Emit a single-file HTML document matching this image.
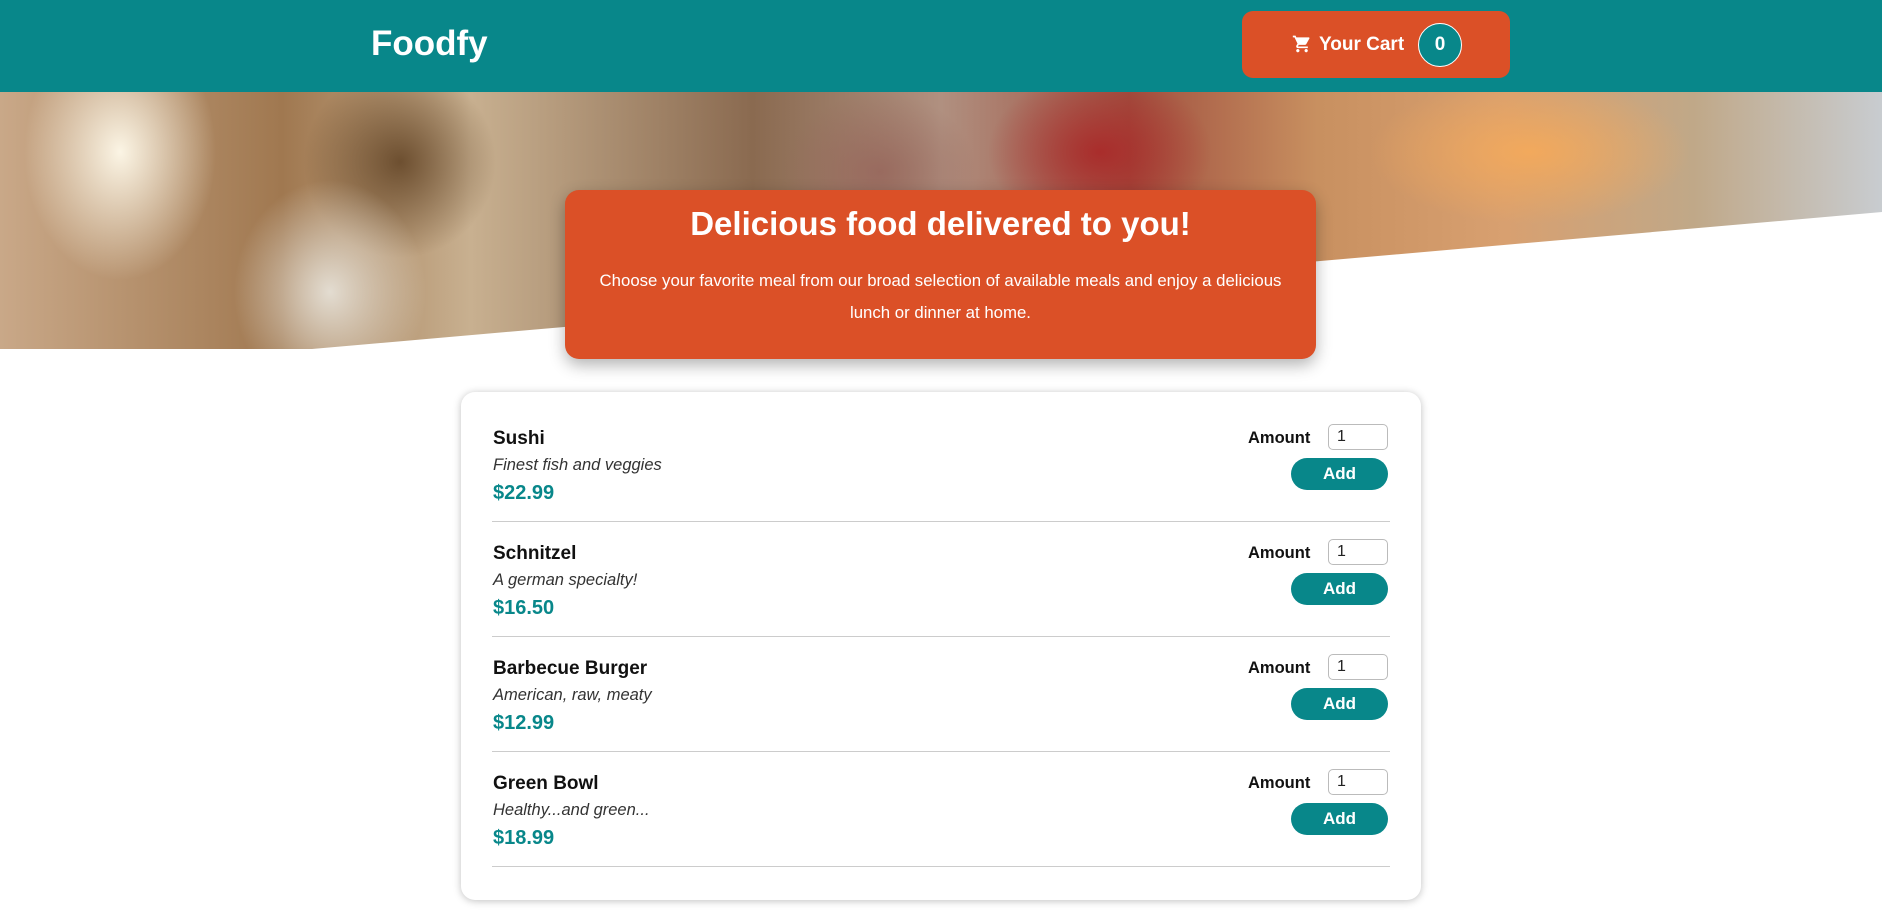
<!DOCTYPE html>
<html><head><meta charset="utf-8"><style>
*{box-sizing:border-box;margin:0;padding:0}
body{width:1882px;height:920px;overflow:hidden;background:#fff;font-family:"Liberation Sans",sans-serif;position:relative}
header{position:absolute;left:0;top:0;width:1882px;height:92px;background:#08878a;z-index:5}
.logo{position:absolute;left:371px;top:24px;color:#fff;font-weight:bold;font-size:35px}
.cart{position:absolute;left:1242px;top:11px;width:268px;height:67px;background:#db5027;border-radius:11px;color:#fff;font-weight:bold;font-size:19px}
.cart svg{position:absolute;left:50px;top:23px}
.cart .t{position:absolute;left:77px;top:23px}
.badge{position:absolute;left:176px;top:12px;width:44px;height:44px;border-radius:50%;background:#08878a;border:1.5px solid #fff;text-align:center;line-height:41px;font-size:19px}
.hero{position:absolute;left:0;top:92px;width:1882px;height:257px;overflow:hidden;
background:
radial-gradient(ellipse 120px 160px at 120px 60px,rgba(255,250,235,.95),rgba(255,255,255,0) 80%),
radial-gradient(ellipse 200px 90px at 1530px 60px,rgba(245,170,90,.9),rgba(0,0,0,0) 80%),
radial-gradient(ellipse 140px 100px at 1100px 60px,rgba(170,40,40,.9),rgba(0,0,0,0) 80%),
radial-gradient(ellipse 120px 100px at 880px 80px,rgba(150,100,90,.8),rgba(0,0,0,0) 80%),
radial-gradient(ellipse 120px 140px at 330px 200px,rgba(230,225,215,.95),rgba(0,0,0,0) 80%),
radial-gradient(ellipse 120px 120px at 400px 70px,rgba(90,60,30,.8),rgba(0,0,0,0) 80%),
linear-gradient(90deg,#c9a888 0%,#a07850 15%,#c8b090 25%,#8a6a50 40%,#b09080 50%,#a05040 60%,#c89060 70%,#d8a070 80%,#c0a888 90%,#c8ccd0 100%)}
.cut{position:absolute;left:0;top:0}
.box{position:absolute;left:565px;top:190px;width:751px;height:169px;background:#db5027;border-radius:14px;box-shadow:0 6px 16px rgba(0,0,0,.3);color:#fff;text-align:center;z-index:3}
.box h2{font-size:33px;margin-top:14px;line-height:40px}
.box p{font-size:16.8px;line-height:32px;margin:21px 24px 0}
.card{position:absolute;left:461px;top:392px;width:960px;height:508px;background:#fff;border-radius:14px;box-shadow:0 1px 8px rgba(0,0,0,.25);padding:0 31px}
.item{height:115px;border-bottom:1px solid #ccc;position:relative}
.item:first-child{margin-top:15px}
.n{position:absolute;left:1px;top:21px;font-weight:bold;font-size:19px;color:#111}
.d{position:absolute;left:1px;top:49px;font-style:italic;font-size:16.5px;color:#333}
.p{position:absolute;left:1px;top:75px;font-weight:bold;font-size:20px;color:#08878a}
.a{position:absolute;left:756px;top:22px;font-weight:bold;font-size:16.5px;color:#111}
.in{position:absolute;left:836px;top:17px;width:60px;height:26px;border:1px solid #bbb;border-radius:5px;font-size:16px;padding:3px 8px;color:#222}
.btn{position:absolute;left:799px;top:51px;width:97px;height:32px;background:#08878a;border-radius:16px;color:#fff;font-weight:bold;font-size:17px;text-align:center;line-height:32px}
</style></head><body>
<header><div class="logo">Foodfy</div>
<div class="cart"><svg width="20" height="20" viewBox="0 0 24 24" fill="#fff"><path d="M7 18c-1.1 0-2 .9-2 2s.9 2 2 2 2-.9 2-2-.9-2-2-2zM1 2v2h2l3.6 7.6-1.4 2.4C5.1 14.3 5 14.6 5 15c0 1.1.9 2 2 2h12v-2H7.4c-.1 0-.2-.1-.2-.2v-.1l.9-1.7h7.4c.8 0 1.4-.4 1.700-1l3.6-6.5c.1-.2.2-.3.2-.5 0-.6-.4-1-1-1H5.2l-.9-2H1zm16 16c-1.1 0-2 .9-2 2s.9 2 2 2 2-.9 2-2-.9-2-2-2z"/></svg><span class="t">Your Cart</span><div class="badge">0</div></div></header>
<div class="hero"><svg class="cut" width="1882" height="257"><polygon points="312,257 1882,120 1882,257" fill="#fff"/></svg></div>
<div class="box"><h2>Delicious food delivered to you!</h2><p>Choose your favorite meal from our broad selection of available meals and enjoy a delicious lunch or dinner at home.</p></div>
<div class="card">
<div class="item"><div class="n">Sushi</div><div class="d">Finest fish and veggies</div><div class="p">$22.99</div><div class="a">Amount</div><div class="in">1</div><div class="btn">Add</div></div>
<div class="item"><div class="n">Schnitzel</div><div class="d">A german specialty!</div><div class="p">$16.50</div><div class="a">Amount</div><div class="in">1</div><div class="btn">Add</div></div>
<div class="item"><div class="n">Barbecue Burger</div><div class="d">American, raw, meaty</div><div class="p">$12.99</div><div class="a">Amount</div><div class="in">1</div><div class="btn">Add</div></div>
<div class="item"><div class="n">Green Bowl</div><div class="d">Healthy...and green...</div><div class="p">$18.99</div><div class="a">Amount</div><div class="in">1</div><div class="btn">Add</div></div>
</div>
</body></html>
